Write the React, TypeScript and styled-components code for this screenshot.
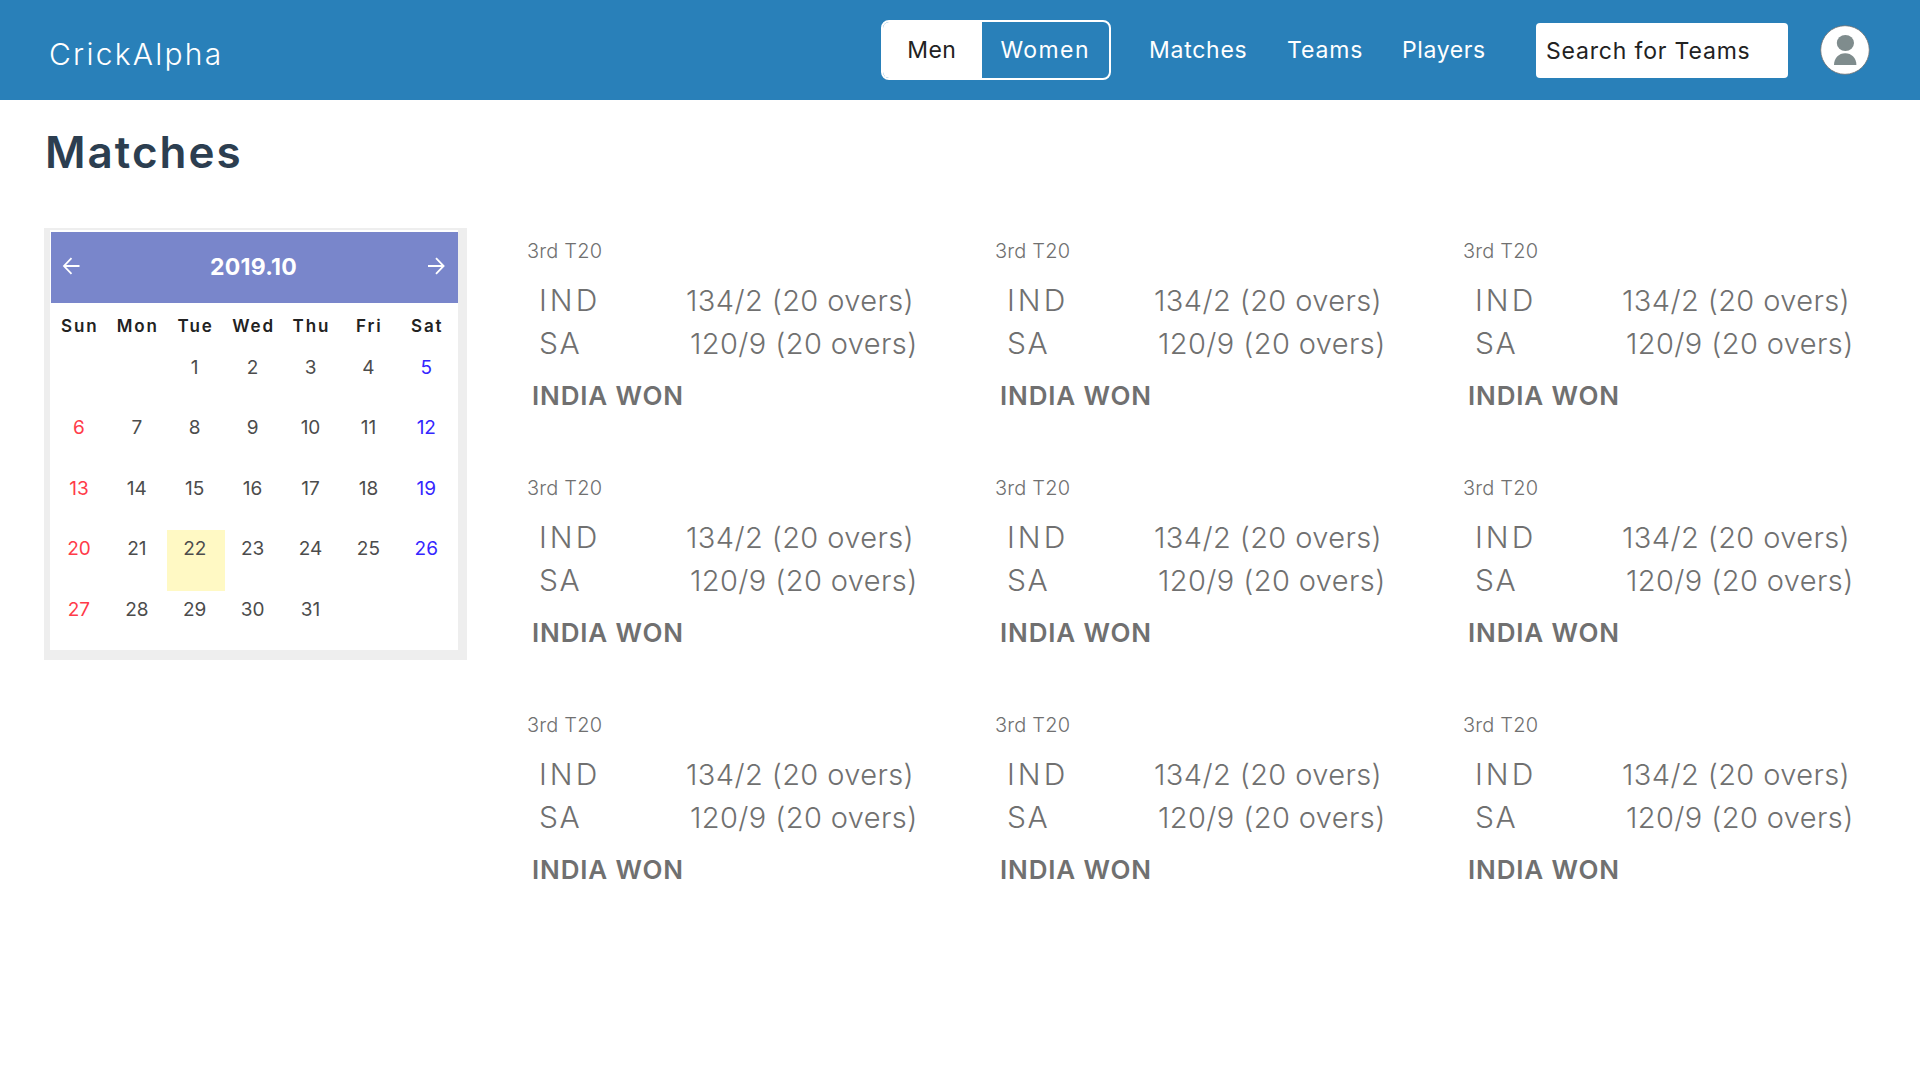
import React, { useState } from 'react';
import styled, { createGlobalStyle } from 'styled-components';

const GlobalStyle = createGlobalStyle`
  *, *::before, *::after { box-sizing: border-box; }
  body {
    margin: 0;
    background: #fff;
    font-family: Inter, "Liberation Sans", sans-serif;
  }
  button, input { font-family: inherit; }
`;

const Page = styled.div`
  width: 100%;
  min-height: 1080px;
  background: #fff;
`;

const Header = styled.header`
  display: flex;
  align-items: center;
  height: 100px;
  padding: 0 50px 0 49px;
  background: #2980b9;
`;

const Logo = styled.div`
  margin-right: auto;
  padding-top: 7px;
  color: #fff;
  font-size: 30px;
  font-weight: 300;
  line-height: 40px;
  letter-spacing: 2.25px;
`;

const Toggle = styled.div`
  display: flex;
  width: 230px;
  height: 60px;
  margin-right: 38px;
  border: 2px solid #fff;
  border-radius: 8px;
  overflow: hidden;
`;

const ToggleOption = styled.button<{ $active: boolean; $width: number; $spacing: number }>`
  width: ${(p) => p.$width}px;
  height: 56px;
  padding: 0 2px 0 ${(p) => p.$spacing}px;
  border: 0;
  background: ${(p) => (p.$active ? '#fff' : 'transparent')};
  color: ${(p) => (p.$active ? '#222' : '#fff')};
  font-size: 23px;
  line-height: 56px;
  letter-spacing: ${(p) => p.$spacing}px;
  text-align: center;
`;

const Nav = styled.nav`
  display: flex;
  width: 387px;
`;

const NavLink = styled.a<{ $width: number; $spacing: number }>`
  width: ${(p) => p.$width}px;
  color: #fff;
  font-size: 23px;
  line-height: 40px;
  letter-spacing: ${(p) => p.$spacing}px;
`;

const SearchInput = styled.input`
  width: 252px;
  height: 55px;
  margin: 1px 32px 0 0;
  padding: 0 10px;
  border: 0;
  border-radius: 4px;
  outline: 0;
  background: #fff;
  color: #222;
  font-size: 23px;
  letter-spacing: 0.82px;

  &::placeholder { color: #222; opacity: 1; }
`;

const Avatar = styled.svg`
  display: block;
  width: 50px;
  height: 50px;
`;

const Title = styled.h1`
  margin: 0;
  padding: 22px 0 0 45px;
  height: 128px;
  color: #2c3e50;
  font-size: 44px;
  font-weight: 600;
  line-height: 60px;
  letter-spacing: 2px;
`;

const Content = styled.main`
  display: flex;
  align-items: flex-start;
  padding-left: 44px;
`;

const CalendarFrame = styled.section`
  flex: none;
  width: 423px;
  height: 432px;
  margin-right: 60px;
  padding: 2px 9px 10px 6px;
  background: #eee;
`;

const Calendar = styled.div`
  height: 420px;
  padding: 2px 0 0 1px;
  background: #fff;
`;

const MonthBar = styled.div`
  display: flex;
  align-items: center;
  justify-content: space-between;
  height: 71px;
  padding: 0 12px 0 10px;
  background: #7986cb;
  color: #fff;
`;

const ArrowIcon = styled.svg`
  display: block;
  width: 20px;
  height: 20px;
  margin-bottom: 4px;
`;

const MonthLabel = styled.div`
  margin-bottom: 1px;
  font-size: 23px;
  font-weight: 700;
  line-height: 30px;
  letter-spacing: 0.25px;
`;

const WeekGrid = styled.div`
  display: grid;
  grid-template-columns: repeat(7, 57.9px);
`;

const Weekday = styled.div`
  margin-left: -2px;
  padding-left: 1.9px;
  color: #222;
  font-size: 17px;
  font-weight: 600;
  line-height: 46px;
  letter-spacing: 1.9px;
  text-align: center;
`;

const dayColors = { sun: '#ff3b49', sat: '#3526ff', week: '#4c4c4c' };

const Day = styled.div<{ $kind: keyof typeof dayColors; $today: boolean }>`
  height: 60.4px;
  padding-right: 2px;
  background: ${(p) => (p.$today ? '#fff9c4' : 'transparent')};
  color: ${(p) => dayColors[p.$kind]};
  font-size: 19px;
  line-height: 38px;
  text-align: center;
`;

const MatchGrid = styled.section`
  display: grid;
  grid-template-columns: 468px 468px 440px;
  row-gap: 39px;
  padding-top: 1px;
`;

const Card = styled.article`
  height: 198px;
  color: #707070;
`;

const League = styled.div`
  margin-bottom: 6px;
  font-size: 20px;
  font-weight: 300;
  line-height: 44px;
  letter-spacing: 0.18px;
`;

const ScoreRow = styled.div`
  display: flex;
  height: 43px;
  padding-left: 12px;
  font-size: 29px;
  font-weight: 300;
  line-height: 43px;
`;

const Team = styled.span<{ $width: number; $spacing: number }>`
  width: ${(p) => p.$width}px;
  font-size: 30px;
  letter-spacing: ${(p) => p.$spacing}px;
`;

const Score = styled.span`
  letter-spacing: 0.4px;
  white-space: nowrap;
`;

const Result = styled.div`
  padding-left: 5px;
  font-size: 26px;
  font-weight: 600;
  line-height: 62px;
  letter-spacing: 0.85px;
`;

const links = [
  { label: 'Matches', width: 138, spacing: 0.73 },
  { label: 'Teams', width: 115, spacing: 0.85 },
  { label: 'Players', width: 134, spacing: 0.6 },
];

const teams = [
  { name: 'IND', score: '134/2 (20 overs)', width: 147, spacing: 3 },
  { name: 'SA', score: '120/9 (20 overs)', width: 151, spacing: 1.5 },
];

const weekdays = ['Sun', 'Mon', 'Tue', 'Wed', 'Thu', 'Fri', 'Sat'];
const leadingBlanks = 2;
const cells = Array.from({ length: 35 }, (_, i) => {
  const day = i - leadingBlanks + 1;
  return day >= 1 && day <= 31 ? day : null;
});

function kindOf(column: number): keyof typeof dayColors {
  if (column === 0) return 'sun';
  return column === 6 ? 'sat' : 'week';
}

function Arrow({ d }: { d: string }) {
  return (
    <ArrowIcon viewBox="0 0 20 20" fill="none" stroke="#fff" strokeWidth="1.8">
      <path d={d} />
    </ArrowIcon>
  );
}

export default function App() {
  const [group, setGroup] = useState('Men');

  return (
    <Page>
      <GlobalStyle />
      <Header>
        <Logo>CrickAlpha</Logo>
        <Toggle>
          <ToggleOption $active={group === 'Men'} $width={99} $spacing={0.4} onClick={() => setGroup('Men')}>
            Men
          </ToggleOption>
          <ToggleOption $active={group === 'Women'} $width={127} $spacing={1.4} onClick={() => setGroup('Women')}>
            Women
          </ToggleOption>
        </Toggle>
        <Nav>
          {links.map((l) => (
            <NavLink key={l.label} $width={l.width} $spacing={l.spacing}>{l.label}</NavLink>
          ))}
        </Nav>
        <SearchInput placeholder="Search for Teams" />
        <Avatar viewBox="0 0 50 50">
          <circle cx="25" cy="25" r="24.3" fill="#fff" stroke="#707070" strokeWidth="0.8" />
          <ellipse cx="25.4" cy="18" rx="8.6" ry="8.1" fill="#7f8c8d" />
          <path d="M14 40C14 33 18.8 28.2 25.2 28.2S36.4 33 36.4 40Z" fill="#7f8c8d" />
        </Avatar>
      </Header>
      <Title>Matches</Title>
      <Content>
        <CalendarFrame>
          <Calendar>
            <MonthBar>
              <Arrow d="M18.5 10H3.5M10.5 2.2L3 10L10.5 17.8" />
              <MonthLabel>2019.10</MonthLabel>
              <Arrow d="M2 10H17M10 2.2L17.6 10L10 17.8" />
            </MonthBar>
            <WeekGrid>
              {weekdays.map((w) => <Weekday key={w}>{w}</Weekday>)}
              {cells.map((day, i) => (
                <Day key={i} $kind={kindOf(i % 7)} $today={day === 22}>{day}</Day>
              ))}
            </WeekGrid>
          </Calendar>
        </CalendarFrame>
        <MatchGrid>
          {Array.from({ length: 9 }, (_, i) => (
            <Card key={i}>
              <League>3rd T20</League>
              {teams.map((t) => (
                <ScoreRow key={t.name}>
                  <Team $width={t.width} $spacing={t.spacing}>{t.name}</Team>
                  <Score>{t.score}</Score>
                </ScoreRow>
              ))}
              <Result>INDIA WON</Result>
            </Card>
          ))}
        </MatchGrid>
      </Content>
    </Page>
  );
}
